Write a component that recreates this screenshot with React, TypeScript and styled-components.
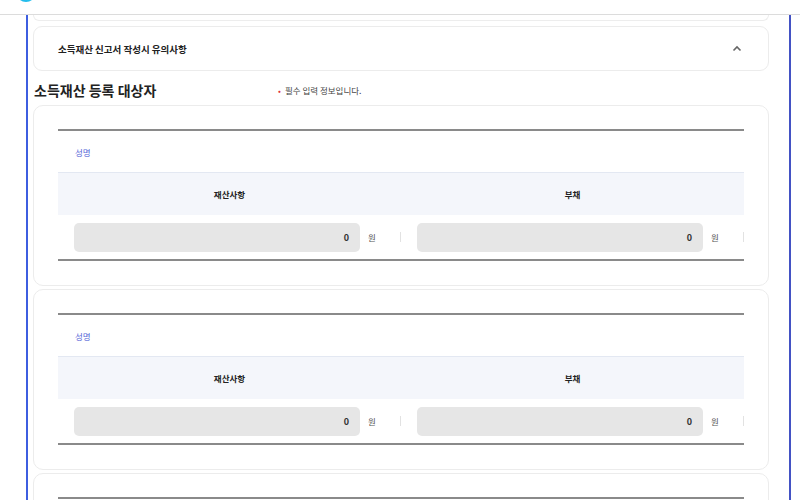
import React from "react";
import styled, { createGlobalStyle } from "styled-components";

const Global = createGlobalStyle`
  html, body { margin: 0; padding: 0; background: #fff; }
  body { font-family: "Noto Sans CJK KR", "Noto Sans", sans-serif; color: #222; overflow: hidden; }
  * { box-sizing: border-box; }
`;

const TopBar = styled.header`
  height: 15px;
  border-bottom: 1px solid #dcdcdc;
  padding-left: 16px;
  overflow: hidden;
`;

const Logo = styled.div`
  width: 20px;
  height: 20px;
  margin-top: -18px;
  border-radius: 50%;
  background: linear-gradient(90deg, #1fb6e8, #28c4f0);
`;

const Frame = styled.main`
  margin-left: 26px;
  width: 765px;
  height: 485px;
  border-left: 2px solid #3d5ee0;
  border-right: 2px solid #4352c4;
  padding: 0 20px 0 5px;
  display: flex;
  flex-direction: column;
  gap: 5px;
  overflow: hidden;
`;

const PrevCardEnd = styled.div`
  height: 6px;
  flex: none;
  border: 1px solid #ededed;
  border-top: none;
  border-radius: 0 0 10px 10px;
`;

const Accordion = styled.div`
  flex: none;
  height: 45px;
  border: 1px solid #ececec;
  border-radius: 9px;
  display: flex;
  align-items: center;
  justify-content: space-between;
  padding: 0 25px 0 24px;
`;

const AccTitle = styled.span`
  font-size: 9.5px;
  font-weight: 700;
  color: #222;
`;

const SectionHead = styled.div`
  flex: none;
  display: flex;
  align-items: center;
  height: 24px;
  padding: 3px 0 0 1px;
`;

const Heading = styled.h2`
  margin: 0;
  width: 244px;
  font-size: 14px;
  font-weight: 700;
  color: #222;
`;

const Required = styled.span`
  font-size: 8.5px;
  color: #444;
  &::before {
    content: "•";
    color: #e0303a;
    margin-right: 4px;
  }
`;

const CardList = styled.div`
  flex: none;
  display: flex;
  flex-direction: column;
  gap: 3px;
`;

const Card = styled.section`
  flex: none;
  border: 1px solid #ececec;
  border-radius: 10px;
  padding: 23px 24px 24px 24px;
`;

const Table = styled.div<{ $partial?: boolean }>`
  border-top: 2px solid #8a8a8a;
  border-bottom: ${(p) => (p.$partial ? "none" : "2px solid #8a8a8a")};
  min-height: ${(p) => (p.$partial ? "130px" : "0")};
`;

const NameRow = styled.div`
  height: 41px;
  display: flex;
  align-items: center;
  padding-left: 17px;
  font-size: 8.5px;
  color: #5566d8;
`;

const HeadRow = styled.div`
  display: grid;
  grid-template-columns: 1fr 1fr;
  height: 43px;
  background: #f4f6fb;
  border-top: 1px solid #e3e8f2;
`;

const HeadCell = styled.div`
  display: flex;
  align-items: center;
  justify-content: center;
  font-size: 8.5px;
  font-weight: 700;
  color: #222;
`;

const InputRow = styled.div`
  display: grid;
  grid-template-columns: 1fr 1fr;
  height: 44px;
  align-items: center;
`;

const InputCell = styled.div`
  display: flex;
  align-items: center;
  padding-left: 16px;
  height: 100%;
  position: relative;
  &::after {
    content: "";
    position: absolute;
    right: 0;
    top: 17px;
    width: 1px;
    height: 10px;
    background: #e2e2e2;
  }
`;

const Field = styled.div`
  width: 286px;
  height: 29px;
  border-radius: 5px;
  background: #e6e6e6;
  display: flex;
  align-items: center;
  justify-content: flex-end;
  padding-right: 11px;
  font-size: 9px;
  font-weight: 700;
  color: #333;
`;

const Unit = styled.span`
  margin-left: 8px;
  font-size: 8.5px;
  color: #555;
`;

const Chevron = () => (
  <svg width="12" height="12" viewBox="0 0 12 12">
    <path d="M2.5 7.5 L6 4 L9.5 7.5" fill="none" stroke="#666" strokeWidth="1.6" />
  </svg>
);

const PersonCard = ({ partial = false }: { partial?: boolean }) => (
  <Card>
    <Table $partial={partial}>
      {!partial && (
        <>
          <NameRow>성명</NameRow>
          <HeadRow>
            <HeadCell>재산사항</HeadCell>
            <HeadCell>부채</HeadCell>
          </HeadRow>
          <InputRow>
            <InputCell>
              <Field>0</Field>
              <Unit>원</Unit>
            </InputCell>
            <InputCell>
              <Field>0</Field>
              <Unit>원</Unit>
            </InputCell>
          </InputRow>
        </>
      )}
    </Table>
  </Card>
);

export default function App() {
  return (
    <>
      <Global />
      <TopBar>
        <Logo />
      </TopBar>
      <Frame>
        <PrevCardEnd />
        <Accordion>
          <AccTitle>소득재산 신고서 작성시 유의사항</AccTitle>
          <Chevron />
        </Accordion>
        <SectionHead>
          <Heading>소득재산 등록 대상자</Heading>
          <Required>필수 입력 정보입니다.</Required>
        </SectionHead>
        <CardList>
          <PersonCard />
          <PersonCard />
          <PersonCard partial />
        </CardList>
      </Frame>
    </>
  );
}
